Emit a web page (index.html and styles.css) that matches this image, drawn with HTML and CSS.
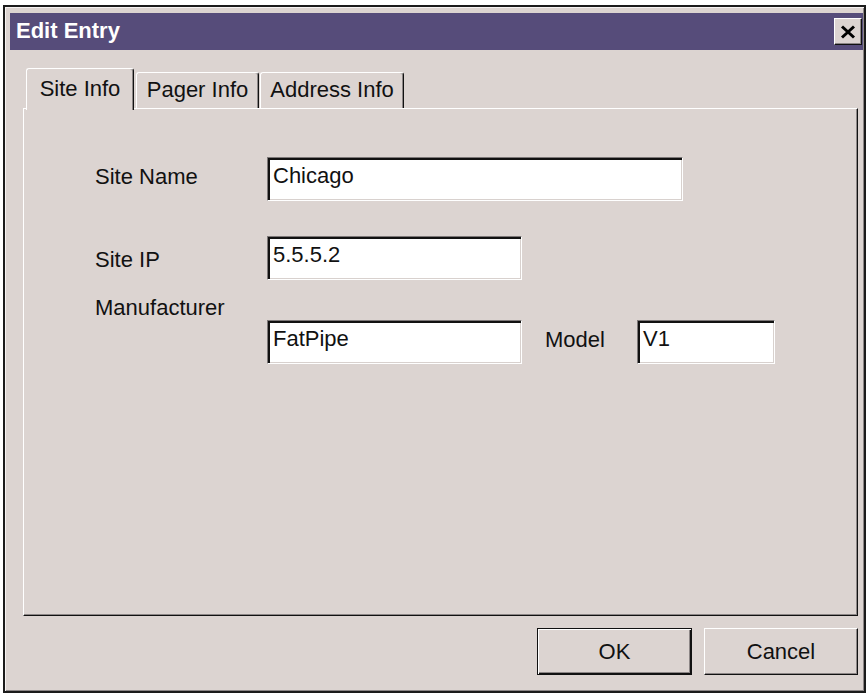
FILE: index.html
```html
<!DOCTYPE html>
<html lang="en">
<head>
<meta charset="utf-8">
<title>Edit Entry</title>
<link rel="stylesheet" href="styles.css">
</head>
<body>
<div class="window">
  <div class="titlebar">
    <span class="title">Edit Entry</span>
    <button class="close" aria-label="Close">
      <svg width="16" height="14" viewBox="0 0 16 14"><path d="M2 1.5 L14 12.5 M14 1.5 L2 12.5" stroke="#000" stroke-width="3" fill="none"/></svg>
    </button>
  </div>
  <div class="content">
    <div class="tabs">
      <div class="tab active tab-site">Site Info</div>
      <div class="tab tab-pager">Pager Info</div>
      <div class="tab tab-address">Address Info</div>
    </div>
    <div class="panel">
      <div class="row">
        <span class="label label-name">Site Name</span>
        <div class="field w-long">Chicago</div>
      </div>
      <div class="row row-ip">
        <span class="label label-ip">Site IP</span>
        <div class="field w-mid">5.5.5.2</div>
      </div>
      <div class="row row-maker">
        <span class="label label-maker">Manufacturer</span>
        <div class="field w-mid">FatPipe</div>
        <span class="label label-model">Model</span>
        <div class="field w-short">V1</div>
      </div>
    </div>
    <div class="buttons">
      <button class="btn btn-default">OK</button>
      <button class="btn">Cancel</button>
    </div>
  </div>
</div>
</body>
</html>
```

FILE: styles.css
```css
* { box-sizing: border-box; }

html, body {
  margin: 0;
  padding: 0;
  background: #ffffff;
}

body {
  font-family: "Liberation Sans", Arial, sans-serif;
  font-size: 22px;
  line-height: 25px;
  color: #111;
}

/* dialog frame */
.window {
  width: 863px;
  height: 688px;
  margin: 5px 0 0 3px;
  background: #dcd4d1;
  border: 2px solid #1b1b1b;
  box-shadow: inset 1px 1px 0 #f6f2f1, inset -1px -1px 0 #8c8686;
  padding: 6px 1px 0 5px;
}

.titlebar {
  height: 37px;
  background: #564c7a;
  display: flex;
  align-items: flex-start;
  justify-content: space-between;
  padding: 5px 1px 0 6px;
}

.title {
  color: #fff;
  font-weight: bold;
  font-size: 22px;
  line-height: 25px;
}

.close {
  width: 28px;
  height: 27px;
  padding: 0;
  margin: 0;
  background: #dcd4d1;
  border: 1px solid;
  border-color: #fff #111 #111 #fff;
  box-shadow: inset -1px -1px 0 #8c8686;
  display: flex;
  align-items: center;
  justify-content: center;
}

.close svg { display: block; }

.content {
  padding: 18px 5px 0 13px;
}

/* tab strip */
.tabs {
  display: flex;
  align-items: flex-end;
  padding-left: 3px;
  margin-bottom: -2px;
}

.tab {
  height: 36px;
  padding-top: 4px;
  text-align: center;
  background: #dcd4d1;
  border-top: 1px solid #fff;
  border-left: 1px solid #fff;
  border-right: 1px solid #111;
  box-shadow: inset -1px 0 0 #8c8686;
  border-radius: 3px 3px 0 0;
  margin-bottom: 2px;
}

.tab.active {
  height: 42px;
  padding-top: 7px;
  margin-bottom: 0;
  position: relative;
  z-index: 1;
}

.tab-site { width: 108px; margin-right: 2px; }
.tab-pager { width: 123px; margin-right: 1px; }
.tab-address { width: 144px; }

/* tab page */
.panel {
  height: 508px;
  border: 1px solid;
  border-color: #fff #111 #111 #fff;
  box-shadow: inset -1px -1px 0 #8c8686;
  padding: 48px 0 0 71px;
}

.row {
  display: flex;
  align-items: flex-start;
}

.row-ip { margin-top: 35px; }
.row-maker { margin-top: 40px; }

.label { display: block; }
.label-name { width: 172px; margin-top: 7px; }
.label-ip { width: 172px; margin-top: 11px; }
.label-maker { width: 172px; margin-top: -25px; }
.label-model { width: 92px; margin-left: 23px; margin-top: 7px; }

/* sunken edit box */
.field {
  height: 44px;
  background: #fff;
  border: 1px solid;
  border-color: #7d7878 #fff #fff #7d7878;
  box-shadow: inset 2px 2px 0 #111, inset -1px -1px 0 #d8d1ce;
  padding: 5px 0 0 5px;
  white-space: nowrap;
}

.w-long { width: 416px; }
.w-mid { width: 255px; }
.w-short { width: 138px; }

/* dialog buttons */
.buttons {
  display: flex;
  justify-content: flex-end;
  gap: 12px;
  margin-top: 12px;
}

.btn {
  width: 154px;
  height: 47px;
  padding: 0;
  margin: 0;
  font-family: inherit;
  font-size: 22px;
  line-height: 25px;
  color: #111;
  background: #dcd4d1;
  border: 1px solid;
  border-color: #fff #111 #111 #fff;
  box-shadow: inset -1px -1px 0 #8c8686;
}

.btn-default {
  width: 155px;
  border-color: #111;
  box-shadow: inset 1px 1px 0 #fff, inset -1px -1px 0 #111, inset -2px -2px 0 #8c8686;
}
```
